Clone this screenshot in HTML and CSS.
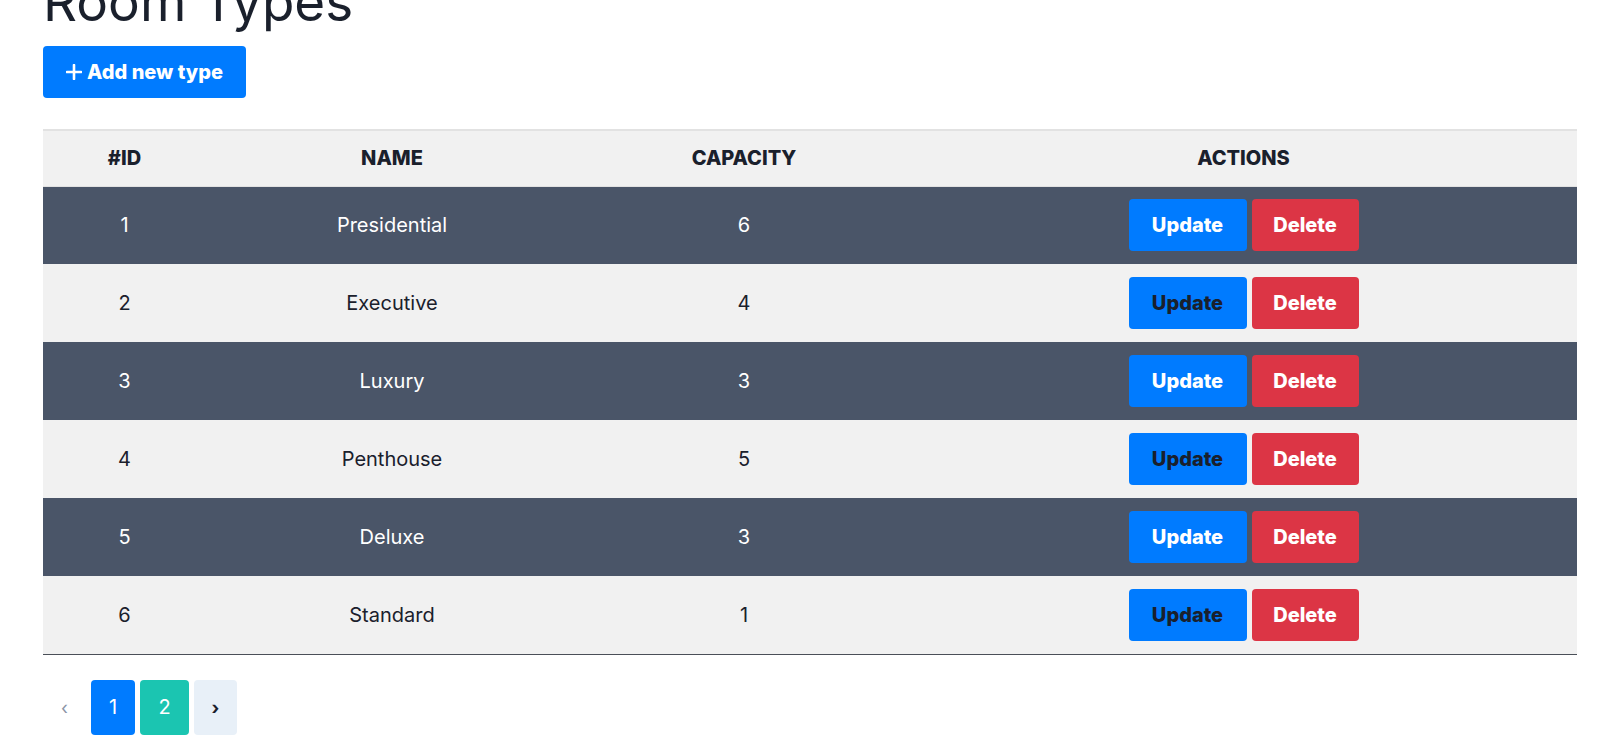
FILE: index.html
```html
<!DOCTYPE html>
<html lang="en">
<head>
<meta charset="utf-8">
<title>Room Types</title>
<link rel="stylesheet" href="styles.css">
</head>
<body>
<div class="page">
  <h1 class="title">Room Types</h1>
  <button class="btn btn-primary btn-add">
    <svg class="plus" width="16" height="16" viewBox="0 0 16 16"><path d="M8 1v14M1 8h14" stroke="#fff" stroke-width="2.6" stroke-linecap="round"/></svg>
    <span>Add new type</span>
  </button>

  <table class="grid">
    <colgroup>
      <col class="c-id"><col class="c-name"><col class="c-cap"><col class="c-act">
    </colgroup>
    <thead>
      <tr><th>#ID</th><th>NAME</th><th>CAPACITY</th><th>ACTIONS</th></tr>
    </thead>
    <tbody>
      <tr class="dark"><td>1</td><td>Presidential</td><td>6</td><td><div class="actions"><button class="btn btn-update">Update</button><button class="btn btn-delete">Delete</button></div></td></tr>
      <tr class="light"><td>2</td><td>Executive</td><td>4</td><td><div class="actions"><button class="btn btn-update">Update</button><button class="btn btn-delete">Delete</button></div></td></tr>
      <tr class="dark"><td>3</td><td>Luxury</td><td>3</td><td><div class="actions"><button class="btn btn-update">Update</button><button class="btn btn-delete">Delete</button></div></td></tr>
      <tr class="light"><td>4</td><td>Penthouse</td><td>5</td><td><div class="actions"><button class="btn btn-update">Update</button><button class="btn btn-delete">Delete</button></div></td></tr>
      <tr class="dark"><td>5</td><td>Deluxe</td><td>3</td><td><div class="actions"><button class="btn btn-update">Update</button><button class="btn btn-delete">Delete</button></div></td></tr>
      <tr class="light"><td>6</td><td>Standard</td><td>1</td><td><div class="actions"><button class="btn btn-update">Update</button><button class="btn btn-delete">Delete</button></div></td></tr>
    </tbody>
  </table>

  <nav class="pager">
    <span class="pg pg-prev">‹</span>
    <span class="pg pg-one">1</span>
    <span class="pg pg-two">2</span>
    <span class="pg pg-next">›</span>
  </nav>
</div>
</body>
</html>
```

FILE: styles.css
```css
* { box-sizing: border-box; }
html, body { margin: 0; padding: 0; background: #fff; }
body {
  font-family: Inter, "Noto Sans", sans-serif;
  font-size: 20px;
  color: #1a202c;
  overflow: hidden;
}
.page {
  padding: 0 37px 0 43px;
}
.title {
  margin: -28px 0 14px 0;
  font-size: 53px;
  line-height: 60px;
  font-weight: 400;
  color: #1a202c;
}
.btn {
  display: inline-flex;
  align-items: center;
  justify-content: center;
  height: 52px;
  padding: 0 21px;
  border: 0;
  border-radius: 4px;
  font-family: inherit;
  font-size: 20px;
  font-weight: 800;
  cursor: pointer;
}
.btn-primary { background: #007bff; color: #fff; }
.btn-add { gap: 5px; width: 203px; }
.plus { display: block; }
.grid {
  margin-top: 31px;
  width: 100%;
  border-collapse: collapse;
  border-bottom: 1px solid #4a4f58;
}
.c-id { width: 163px; }
.c-name { width: 372px; }
.c-cap { width: 332px; }
.c-act { width: auto; }
.grid th {
  height: 56px;
  padding: 0;
  background: #f1f1f1;
  border-top: 2px solid #e2e2e2;
  border-bottom: 1px solid #e2e2e2;
  font-weight: 800;
  font-size: 20px;
  color: #1a202c;
  text-align: center;
}
.grid td {
  height: 78px;
  padding: 0;
  text-align: center;
}
.grid tr.dark td { background: #4a5568; color: #fff; }
.grid tr.light td { background: #f1f1f1; color: #1a202c; }
.actions {
  display: flex;
  justify-content: center;
  gap: 5px;
}
.btn-update { background: #007bff; color: inherit; width: 118px; }
.btn-delete { background: #dc3545; color: #fff; width: 107px; }
.pager {
  display: flex;
  gap: 5px;
  margin-top: 25px;
}
.pg {
  display: flex;
  align-items: center;
  justify-content: center;
  height: 55px;
  border-radius: 4px;
  font-size: 20px;
}
.pg-prev { width: 43px; color: #8a94a6; font-size: 18px; }
.pg-one { width: 44px; background: #007bff; color: #fff; }
.pg-two { width: 49px; background: #1bc5b1; color: #fff; }
.pg-next { width: 43px; background: #e8f0f8; color: #1a202c; font-size: 18px; font-weight: 700; }
```
